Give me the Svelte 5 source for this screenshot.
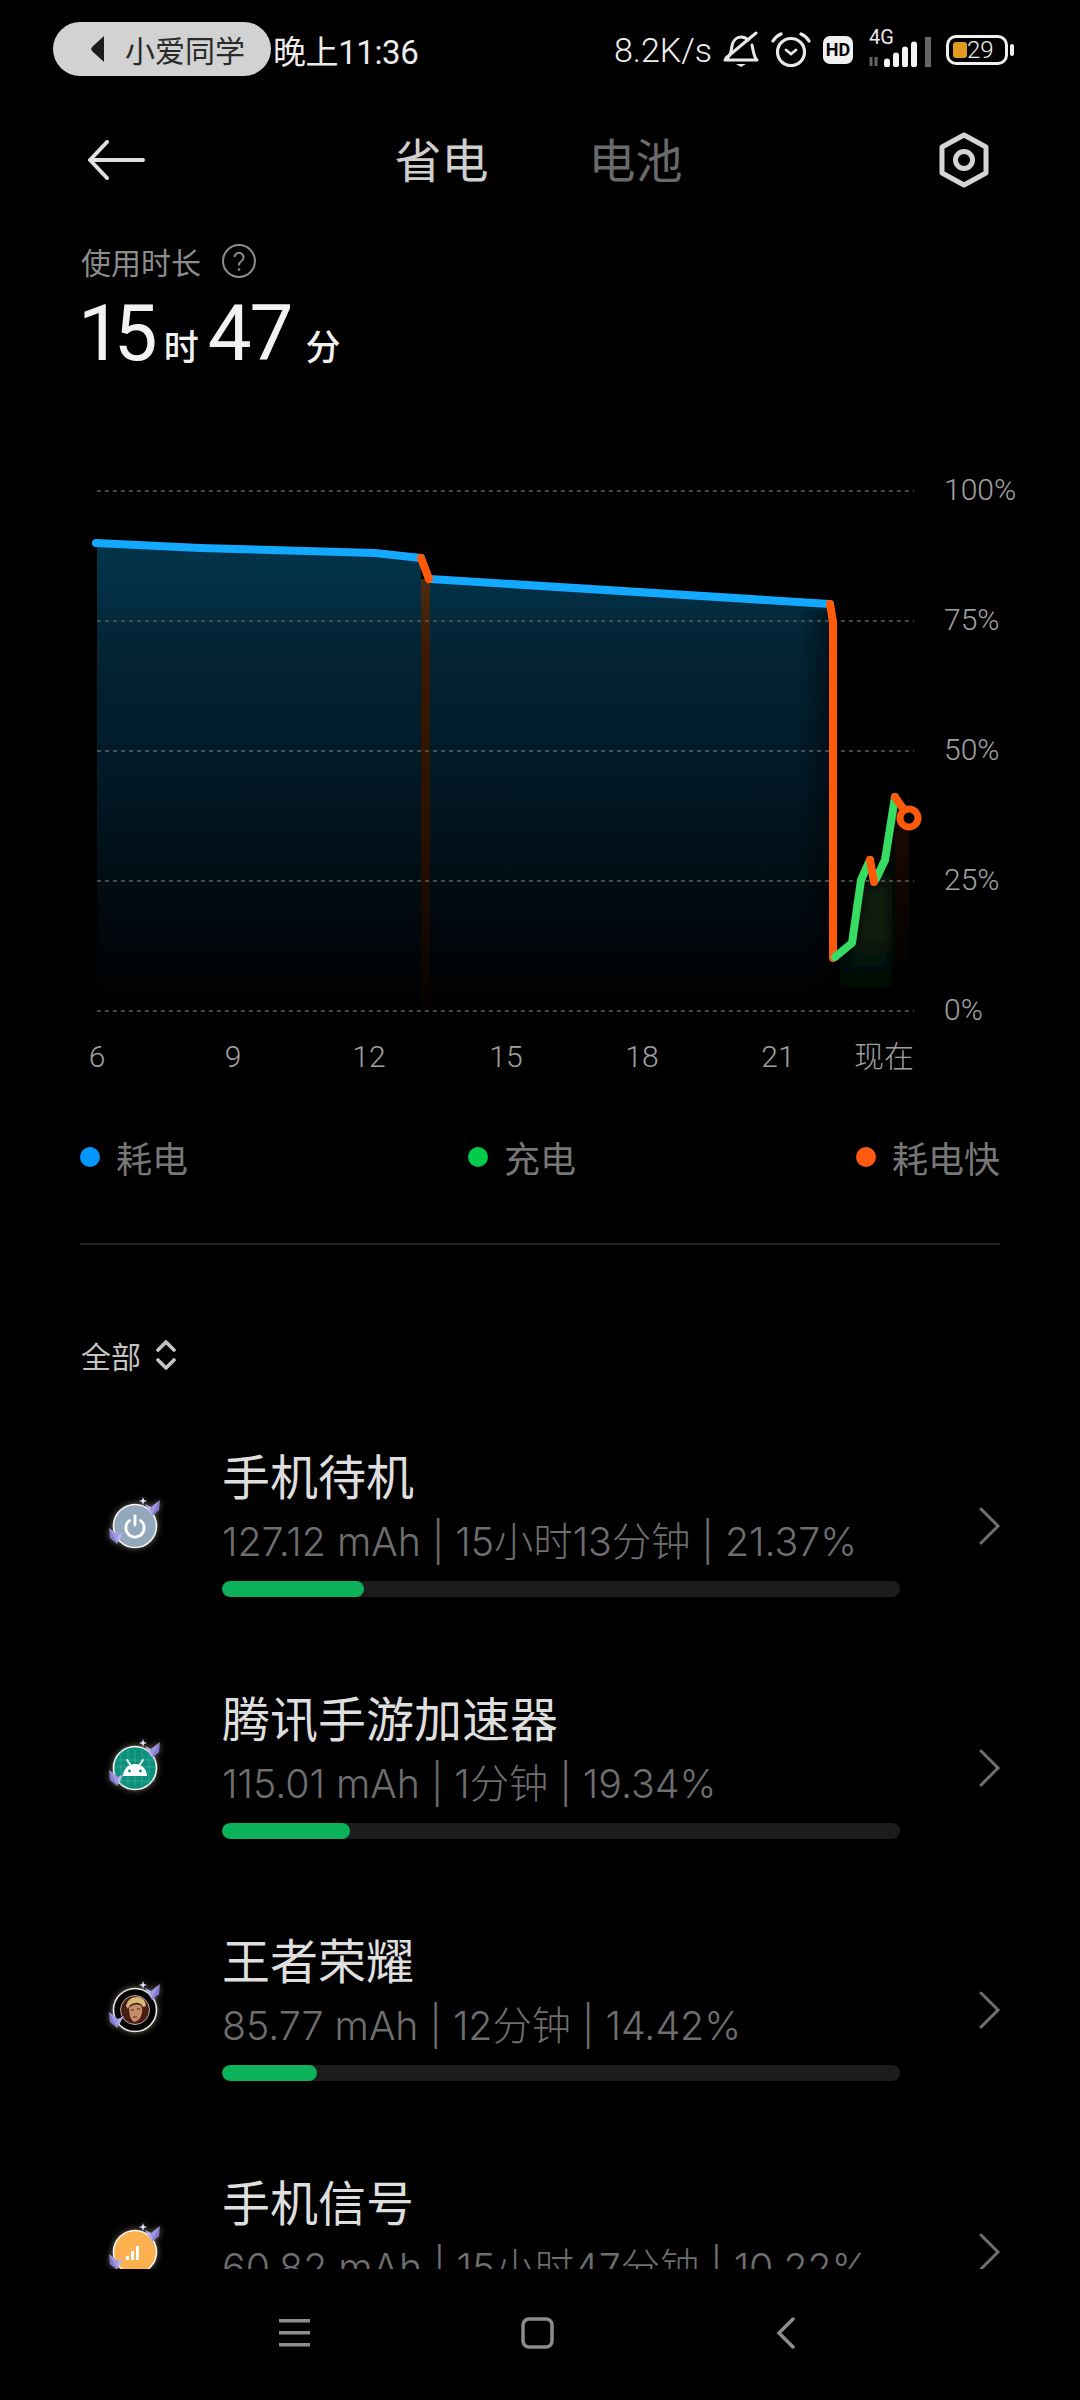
<script>
  const gridLines = [
    { y: 491, label: "100%" },
    { y: 621, label: "75%" },
    { y: 751, label: "50%" },
    { y: 881, label: "25%" },
    { y: 1011, label: "0%" }
  ];
  const hours = [
    { x: 97, label: "6" },
    { x: 233, label: "9" },
    { x: 369, label: "12" },
    { x: 506, label: "15" },
    { x: 642, label: "18" },
    { x: 778, label: "21" },
    { x: 884, label: "现在" }
  ];
  const legend = [
    { label: "耗电", color: "#0098ff" },
    { label: "充电", color: "#00cc4c" },
    { label: "耗电快", color: "#ff5a10" }
  ];
  const apps = [
    { name: "手机待机", stats: "127.12 mAh | 15小时13分钟 | 21.37%", bar: 142, icon: "power" },
    { name: "腾讯手游加速器", stats: "115.01 mAh | 1分钟 | 19.34%", bar: 128, icon: "android" },
    { name: "王者荣耀", stats: "85.77 mAh | 12分钟 | 14.42%", bar: 95, icon: "hero" },
    { name: "手机信号", stats: "60.82 mAh | 15小时47分钟 | 10.22%", bar: 68, icon: "signal" }
  ];
</script>

{#snippet butterfly(x, y, flip)}
  <g transform="translate({x} {y}) scale({flip} 1)">
    <path d="M0 7L-7 -5L-1 -2Z" fill="#b7b0ee" />
    <path d="M0 7L8 -9L7 1Z" fill="#8279d4" />
    <path d="M0 7L-1 -2L8 -9Z" fill="#a097e4" />
  </g>
{/snippet}

{#snippet appIcon(kind)}
  <svg class="app-icon" viewBox="0 0 60 60" width="60" height="60">
    {#if kind === "power"}
      <circle cx="30" cy="30" r="21.500" fill="#93a8ba" stroke="#f4f4f4" stroke-width="1.600" />
      <path d="M24.500 24.500a9.200 9.200 0 1 0 11 0" fill="none" stroke="#fff" stroke-width="2.800" stroke-linecap="round" />
      <path d="M30 20v9" stroke="#fff" stroke-width="2.800" stroke-linecap="round" />
    {:else if kind === "android"}
      <circle cx="30" cy="30" r="21.500" fill="#0d8f7c" stroke="#f4f4f4" stroke-width="1.600" />
      <path d="M10 22h40M10 29h40M10 43h40M16 12v36M23 12v36M30 12v36M37 12v36M44 12v36" stroke="#3fb6a4" stroke-width="0.600" />
      <path d="M18 38a12 12 0 0 1 24 0Z" fill="#fff" />
      <path d="M22 22l3.500 5M38 22l-3.500 5" stroke="#fff" stroke-width="1.800" stroke-linecap="round" />
      <circle cx="24.500" cy="33" r="1.400" fill="#0d8f7c" />
      <circle cx="35.500" cy="33" r="1.400" fill="#0d8f7c" />
    {:else if kind === "hero"}
      <circle cx="30" cy="30" r="21.500" fill="#000" stroke="#e8e8e8" stroke-width="1.600" />
      <circle cx="30" cy="30" r="14.500" fill="#4a1c16" stroke="#d8d0c8" stroke-width="0.800" />
      <path d="M21 26q2 -9 11 -9q8 0 9 9l-3 1q-3 -5 -8 -4q-6 1 -7 6Z" fill="#d9b877" />
      <path d="M24 28q4 -5 11 -3q3 2 2 8q-2 8 -8 9q-5 -3 -5 -14Z" fill="#c68d6c" />
      <path d="M26 30h3M32 29h3" stroke="#4a2418" stroke-width="1.200" />
      <path d="M28 37h4" stroke="#7a3524" stroke-width="1.200" />
    {:else}
      <circle cx="30" cy="30" r="21.500" fill="#fdb14e" stroke="#f4f4f4" stroke-width="1.600" />
      <path d="M21 38h3v-4h-3ZM26 38h3v-9h-3ZM31 38h3v-14h-3Z" fill="#fff" />
    {/if}
    <path d="M38 1l1 3 3 1 -3 1 -1 3 -1 -3 -3 -1 3 -1Z" fill="#e8e4ff" />
    {@render butterfly(47, 13, 1)}
    {@render butterfly(12, 41, -1)}
  </svg>
{/snippet}

<div class="page">
  <div class="status">
    <div class="pill">
      <svg width="15" height="28" viewBox="0 0 15 28"><path d="M14 1v26L2 16a3 3 0 0 1 0-4Z" fill="#1c1c1c" /></svg>
      <span>小爱同学</span>
    </div>
    <span class="time">晚上11:36</span>
    <div class="status-right">
      <span class="speed">8.2K/s</span>
      <svg width="36" height="38" viewBox="0 0 36 38" fill="none" stroke="#e8e8e8" stroke-width="3" stroke-linecap="round" stroke-linejoin="round">
        <path d="M2 29c5-3 6-7 7-14 1-6 5-9 9-9 3 0 5 1 7 3M29 14l1 5c1 5 2 8 4 10H2" />
        <path d="M3 27L33 2" />
        <path d="M13 33h10l-5 3Z" fill="#e8e8e8" stroke="none" />
      </svg>
      <svg width="40" height="36" viewBox="0 0 40 36" fill="none" stroke="#e8e8e8" stroke-width="3.200" stroke-linecap="round">
        <circle cx="20" cy="20" r="13.500" />
        <path d="M15 18l5 4 5-4" stroke-width="2.800" />
        <path d="M2 9q3-5 8-7M38 9q-3-5-8-7" />
      </svg>
      <div class="hd">HD</div>
      <div class="net">
        <span class="net-label">4G</span>
        <svg width="66" height="30" viewBox="0 0 66 30">
          <path d="M4 20v9M9 29v-9" stroke="#666" stroke-width="3" />
          <path d="M20 27.500v-3M29 27.500v-9M38 27.500v-15M47 27.500v-20" stroke="#f4f4f4" stroke-width="6" stroke-linecap="round" />
          <rect x="58" y="0" width="6" height="30" fill="#666" />
        </svg>
      </div>
      <div class="battery">
        <div class="battery-fill"></div>
        <span>29</span>
      </div>
      <div class="battery-nub"></div>
    </div>
  </div>

  <div class="header">
    <svg width="58" height="40" viewBox="0 0 58 40" fill="none" stroke="#e0e0e0" stroke-width="4" stroke-linecap="round" stroke-linejoin="round">
      <path d="M20 2L3 20l17 18M3 20h53" />
    </svg>
    <div class="tabs">
      <span class="tab on">省电</span>
      <span class="tab">电池</span>
    </div>
    <svg width="52" height="56" viewBox="0 0 52 56" fill="none" stroke="#d4d4d4" stroke-width="5" stroke-linejoin="round">
      <path d="M26 3l22 12v26L26 53 4 41V15Z" />
      <circle cx="26" cy="28" r="8.500" />
    </svg>
  </div>

  <div class="summary">
    <div class="summary-label">
      <span>使用时长</span>
      <svg width="36" height="36" viewBox="0 0 36 36" fill="none" stroke="#8c8c8c" stroke-width="2">
        <circle cx="18" cy="18" r="16" />
        <path d="M13.500 14a4.500 4.500 0 1 1 7 4c-2 1.300-2.500 2-2.500 4.500" />
        <circle cx="18" cy="26.500" r="1.300" fill="#8c8c8c" stroke="none" />
      </svg>
    </div>
    <div class="summary-value">
      <span class="big first">15</span><span class="unit">时</span><span class="big second">47</span><span class="unit">分</span>
    </div>
  </div>

  <svg class="chart" viewBox="0 460 1080 620" width="1080" height="620">
    <defs>
      <linearGradient id="blueFill" gradientUnits="userSpaceOnUse" x1="0" y1="545" x2="0" y2="1005">
        <stop offset="0" stop-color="#04344a" />
        <stop offset="0.1" stop-color="#032f44" />
        <stop offset="0.2" stop-color="#022536" />
        <stop offset="0.5" stop-color="#011926" />
        <stop offset="0.78" stop-color="#010a10" />
        <stop offset="1" stop-color="#000" />
      </linearGradient>
      <linearGradient id="orangeFill" gradientUnits="userSpaceOnUse" x1="0" y1="580" x2="0" y2="1000">
        <stop offset="0" stop-color="#4c2c10" />
        <stop offset="0.15" stop-color="#3c1a04" />
        <stop offset="0.6" stop-color="#2a1000" />
        <stop offset="1" stop-color="#060200" />
      </linearGradient>
      <linearGradient id="greenFill" gradientUnits="userSpaceOnUse" x1="0" y1="860" x2="0" y2="1000">
        <stop offset="0" stop-color="#08200f" />
        <stop offset="0.65" stop-color="#07190c" />
        <stop offset="1" stop-color="#000" />
      </linearGradient>
      <linearGradient id="lateOrange" gradientUnits="userSpaceOnUse" x1="0" y1="815" x2="0" y2="985">
        <stop offset="0" stop-color="#1c0a02" />
        <stop offset="1" stop-color="#000" />
      </linearGradient>
      <linearGradient id="edgeFade" x1="0" y1="0" x2="1" y2="0">
        <stop offset="0" stop-color="#000" stop-opacity="0" />
        <stop offset="1" stop-color="#000" stop-opacity="0.45" />
      </linearGradient>
      <filter id="soften" x="-30%" y="-30%" width="160%" height="160%">
        <feGaussianBlur stdDeviation="7" />
      </filter>
    </defs>

    <path d="M97 543L200 548L375 553L421 558V1011H97Z" fill="url(#blueFill)" />
    <path d="M430 579L830 604V1011H430Z" fill="url(#blueFill)" />
    <rect x="800" y="610" width="30" height="401" fill="url(#edgeFade)" />
    <rect x="421" y="579" width="9" height="432" fill="url(#orangeFill)" />
    <path d="M840 965L852 950L861 890L870 870L874 892L885 870L892 820V990H840Z" fill="url(#greenFill)" filter="url(#soften)" />
    <path d="M895 797L909 818V990H895Z" fill="url(#lateOrange)" />

    {#each gridLines as line}
      <line x1="97" x2="914" y1={line.y} y2={line.y} stroke="#5a5f60" stroke-width="1.500" stroke-dasharray="4 4" />
      <text x="944" y={line.y + 9} class="axis">{line.label}</text>
    {/each}
    {#each hours as hour}
      <text x={hour.x} y="1067" text-anchor="middle" class="axis">{hour.label}</text>
    {/each}

    <g fill="none" stroke-width="8" stroke-linecap="round" stroke-linejoin="round">
      <path d="M96 543L200 548L375 553L421 558" stroke="#13a9ff" />
      <path d="M430 579L830 604" stroke="#13a9ff" />
      <path d="M421 558L429 579" stroke="#ff5a0a" />
      <path d="M830 604L833 622V958" stroke="#ff5a0a" />
      <path d="M835 957L852 943L861 880L870 860" stroke="#37dc63" />
      <path d="M876 879L885 860L895 797" stroke="#37dc63" />
      <path d="M870 860L874 882" stroke="#ff5a0a" />
      <path d="M895 797L907 814" stroke="#ff5a0a" />
    </g>
    <circle cx="909" cy="818" r="9" fill="#000" stroke="#ff5a0a" stroke-width="7" />
  </svg>

  <div class="legend">
    {#each legend as item}
      <div class="legend-item">
        <i style="background: {item.color}"></i>
        <span>{item.label}</span>
      </div>
    {/each}
  </div>

  <div class="divider"></div>

  <div class="filter">
    <span>全部</span>
    <svg width="22" height="30" viewBox="0 0 22 30" fill="none" stroke="#c4c4c4" stroke-width="3.600" stroke-linecap="round" stroke-linejoin="round">
      <path d="M3 10l8-8 8 8M3 20l8 8 8-8" />
    </svg>
  </div>

  <div class="list">
    {#each apps as app}
      <div class="row">
        <div class="icon-box">{@render appIcon(app.icon)}</div>
        <div class="info">
          <div class="name">{app.name}</div>
          <div class="stats">{app.stats}</div>
          <div class="track"><div class="fill" style="width: {app.bar}px"></div></div>
        </div>
        <svg class="chevron" width="22" height="38" viewBox="0 0 22 38" fill="none" stroke="#6f6f6f" stroke-width="3" stroke-linecap="round">
          <path d="M2 2l17 17L2 36" />
        </svg>
      </div>
    {/each}
  </div>

  <div class="nav">
    <svg class="nav-menu" width="32" height="30" viewBox="0 0 32 30" fill="#8c8c8c">
      <rect y="1" width="31" height="3.500" /><rect y="13" width="31" height="3.500" /><rect y="25" width="31" height="3.500" />
    </svg>
    <svg class="nav-home" width="34" height="32" viewBox="0 0 34 32" fill="none" stroke="#8c8c8c" stroke-width="3.500">
      <rect x="2" y="2" width="29" height="28" rx="6" />
    </svg>
    <svg class="nav-back" width="20" height="32" viewBox="0 0 20 32" fill="none" stroke="#8c8c8c" stroke-width="3.500" stroke-linecap="round">
      <path d="M17 2L3 16l14 14" />
    </svg>
  </div>
</div>

<style>
  :global(body) {
    background: #000;
  }

  .page {
    width: 1080px;
    height: 2400px;
    background: #000;
    overflow: hidden;
    position: relative;
    font-family: Roboto, "Noto Sans CJK SC", sans-serif;
    color: #e0e0e0;
  }

  .status {
    height: 100px;
    display: flex;
    align-items: center;
    padding: 0 66px 0 273px;
    justify-content: space-between;
    box-sizing: border-box;
  }

  .pill {
    position: absolute;
    left: 53px;
    top: 22px;
    width: 218px;
    height: 54px;
    border-radius: 27px;
    background: #d2d2d2;
    display: flex;
    align-items: center;
    gap: 20px;
    padding-left: 37px;
    box-sizing: border-box;
    color: #2a2a2a;
    font-size: 30px;
  }

  .time {
    font-size: 33px;
    letter-spacing: -0.4px;
    color: #ececec;
  }

  .status-right {
    display: flex;
    align-items: center;
    gap: 12px;
  }

  .speed {
    font-size: 34px;
    font-weight: 300;
    color: #f0f0f0;
    margin-right: -1px;
  }

  .hd {
    width: 30px;
    height: 28px;
    background: #f0f0f0;
    border-radius: 7px;
    color: #000;
    font-size: 18px;
    font-weight: 700;
    line-height: 28px;
    text-align: center;
  }

  .net {
    position: relative;
    width: 66px;
    height: 34px;
    margin: 0 1px 0 2px;
    display: flex;
    align-items: flex-end;
  }

  .net-label {
    position: absolute;
    left: 2px;
    top: -7px;
    font-size: 20px;
    line-height: 22px;
    color: #e8e8e8;
  }

  .battery {
    width: 62px;
    height: 30px;
    border: 3px solid #f0f0f0;
    border-radius: 10px;
    box-sizing: border-box;
    position: relative;
    padding-left: 18px;
    font-size: 24px;
    font-weight: 300;
    line-height: 24px;
    color: #f0f0f0;
  }

  .battery span {
    position: relative;
  }

  .battery-fill {
    position: absolute;
    left: 4px;
    top: 4px;
    bottom: 4px;
    width: 14px;
    border-radius: 3px;
    background: #e09a20;
  }

  .battery-nub {
    width: 4px;
    height: 12px;
    margin-left: -10px;
    border-radius: 2px;
    background: #f0f0f0;
  }

  .header {
    height: 120px;
    display: flex;
    align-items: center;
    justify-content: space-between;
    padding: 0 90px 0 87px;
  }

  .tabs {
    display: flex;
    gap: 100px;
    margin: -5px 0 0 -6px;
  }

  .tab {
    font-size: 47px;
    color: #6a6a6a;
  }

  .tab.on {
    color: #cfcfcf;
  }

  .summary {
    height: 240px;
    padding: 21px 81px 0;
    box-sizing: border-box;
  }

  .summary-label {
    display: flex;
    align-items: center;
    gap: 20px;
    height: 40px;
    font-size: 30px;
    color: #8c8c8c;
  }

  .summary-value {
    display: flex;
    align-items: baseline;
    height: 90px;
    margin-top: 7px;
    color: #f2f2f2;
  }

  .big {
    font-size: 78px;
    letter-spacing: -2px;
  }

  .first {
    letter-spacing: -8px;
    margin-left: -3px;
  }

  .second {
    margin-left: 9px;
  }

  .unit {
    font-size: 35px;
    font-weight: 500;
    margin-left: 14px;
  }

  .chart {
    display: block;
  }

  .axis {
    font-size: 30px;
    font-weight: 300;
    fill: #a0a0a0;
    font-family: Roboto, "Noto Sans CJK SC", sans-serif;
  }

  .legend {
    margin-top: 47px;
    height: 60px;
    padding: 0 80px;
    display: flex;
    justify-content: space-between;
    align-items: center;
  }

  .legend-item {
    display: flex;
    align-items: center;
    gap: 16px;
    font-size: 36px;
    color: #777;
  }

  .legend-item i {
    width: 20px;
    height: 20px;
    border-radius: 50%;
  }

  .divider {
    height: 2px;
    margin: 56px 80px 0;
    background: #222;
  }

  .filter {
    margin: 85px 0 0 81px;
    height: 50px;
    display: flex;
    align-items: center;
    gap: 14px;
    font-size: 30px;
    color: #c4c4c4;
  }

  .list {
    margin-top: 25px;
    height: 864px;
    overflow: hidden;
  }

  .row {
    height: 242px;
    display: flex;
    align-items: center;
    padding-left: 105px;
  }

  .icon-box {
    width: 60px;
    height: 60px;
    margin-right: 57px;
  }

  .app-icon {
    display: block;
    overflow: visible;
    filter: drop-shadow(0 0 3px rgba(255, 240, 200, 0.45));
  }

  .info {
    align-self: flex-start;
    width: 678px;
    padding-top: 42px;
  }

  .name {
    font-size: 48px;
    line-height: 64px;
    color: #dedede;
  }

  .stats {
    font-family: Inter, "Noto Sans CJK SC", sans-serif;
    font-size: 39.300px;
    font-weight: 300;
    line-height: 62px;
    color: #6e6e6e;
    white-space: nowrap;
  }

  .track {
    height: 16px;
    margin-top: 8px;
    border-radius: 8px;
    background: #1c1c1c;
    overflow: hidden;
  }

  .fill {
    height: 100%;
    border-radius: 8px;
    background: #0bb25a;
  }

  .chevron {
    margin-left: 79px;
  }

  .nav {
    height: 131px;
    display: flex;
    align-items: center;
    padding: 0 0 4px 279px;
    box-sizing: border-box;
  }

  .nav-home {
    margin-left: 210px;
  }

  .nav-back {
    margin-left: 221px;
  }
</style>
